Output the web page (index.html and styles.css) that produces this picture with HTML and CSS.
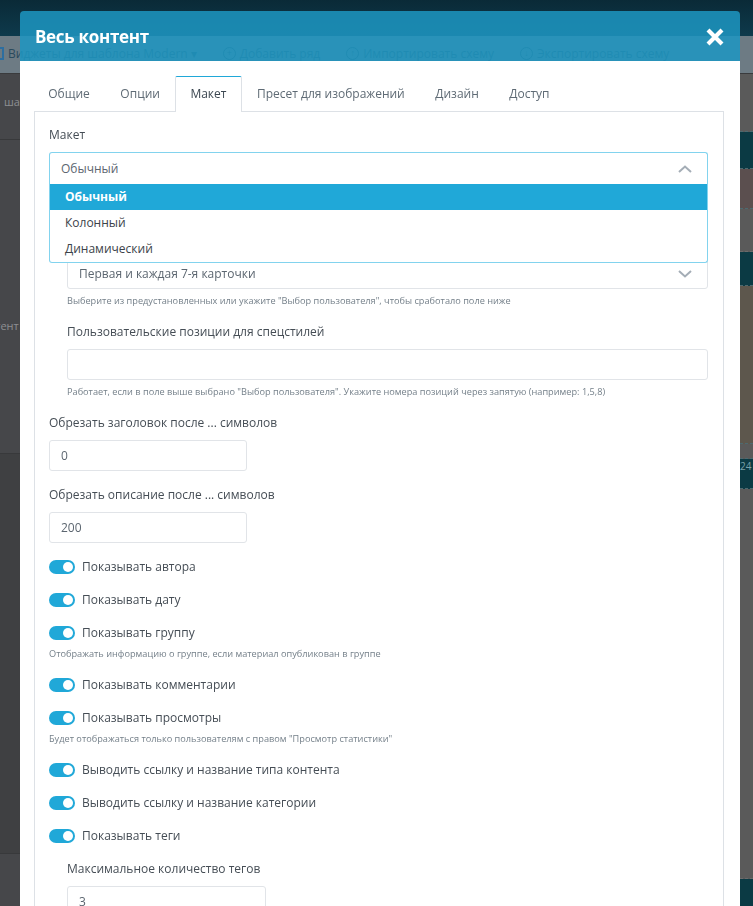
FILE: index.html
```html
<!DOCTYPE html>
<html lang="ru">
<head>
<meta charset="utf-8">
<title>Весь контент</title>
<link rel="stylesheet" href="styles.css">
</head>
<body>
<div class="page">
  <div class="topbar"></div>
  <div class="toolbar">
    <span class="tb-item tb-first"><span class="tb-sq"></span>Виджеты для шаблона Modern ▾</span>
    <span class="tb-item"><span class="tb-circ">+</span>Добавить ряд</span>
    <span class="tb-item"><span class="tb-circ">↑</span>Импортировать схему</span>
    <span class="tb-item"><span class="tb-circ">↓</span>Экспортировать схему</span>
  </div>
  <div class="workspace">
    <div class="sidebar">
      <div class="sb-row sb-r1">шаблон</div>
      <div class="sb-row sb-r2">контент</div>
      <div class="sb-row sb-r3"></div>
    </div>
    <div class="canvas"></div>
    <div class="rightcol">
      <div class="rc rc-gray" style="height:58px"></div>
      <div class="rc rc-teal" style="height:37px"></div>
      <div class="rc rc-brown" style="height:40px"></div>
      <div class="rc rc-gray rc-dash" style="height:43px"></div>
      <div class="rc rc-teal" style="height:34px"></div>
      <div class="rc rc-olive" style="height:158px"></div>
      <div class="rc rc-gray" style="height:15px"></div>
      <div class="rc rc-teal" style="height:30px">24</div>
      <div class="rc rc-gray rc-dash" style="height:390px"></div>
      <div class="rc rc-teal" style="height:40px"></div>
    </div>
  </div>
</div>

<div class="modal">
  <div class="modal-header">
    <h2 class="modal-title">Весь контент</h2>
    <svg class="close" width="18" height="18" viewBox="0 0 18 18"><path d="M2 2 L16 16 M16 2 L2 16" stroke="#fff" stroke-width="4.2" fill="none"/></svg>
  </div>
  <div class="modal-body">
    <ul class="tabs">
      <li class="tab">Общие</li>
      <li class="tab">Опции</li>
      <li class="tab active">Макет</li>
      <li class="tab">Пресет для изображений</li>
      <li class="tab">Дизайн</li>
      <li class="tab">Доступ</li>
    </ul>
    <div class="panel">
      <div class="group">
        <div class="label">Макет</div>
        <div class="select open">
          <span class="select-value">Обычный</span>
          <svg class="chev" width="14" height="8" viewBox="0 0 14 8"><path d="M1 7 L7 1.5 L13 7" stroke="#a4adb6" stroke-width="2" fill="none"/></svg>
          <ul class="menu">
            <li class="opt selected">Обычный</li>
            <li class="opt">Колонный</li>
            <li class="opt">Динамический</li>
          </ul>
        </div>
      </div>

      <div class="group">
        <div class="toggle-row"><span class="toggle"></span></div>
      </div>

      <div class="indent">
        <div class="group">
          <div class="label label-empty"></div>
          <div class="select">
            <span class="select-value">Первая и каждая 7-я карточки</span>
            <svg class="chev" width="14" height="8" viewBox="0 0 14 8"><path d="M1 1 L7 6.5 L13 1" stroke="#a4adb6" stroke-width="2" fill="none"/></svg>
          </div>
          <div class="help">Выберите из предустановленных или укажите "Выбор пользователя", чтобы сработало поле ниже</div>
        </div>
        <div class="group">
          <div class="label">Пользовательские позиции для спецстилей</div>
          <div class="input"></div>
          <div class="help">Работает, если в поле выше выбрано "Выбор пользователя". Укажите номера позиций через запятую (например: 1,5,8)</div>
        </div>
      </div>

      <div class="group">
        <div class="label">Обрезать заголовок после ... символов</div>
        <div class="input short">0</div>
      </div>
      <div class="group">
        <div class="label">Обрезать описание после ... символов</div>
        <div class="input short">200</div>
      </div>

      <div class="group">
        <div class="toggle-row"><span class="toggle"></span><span class="toggle-label">Показывать автора</span></div>
      </div>
      <div class="group">
        <div class="toggle-row"><span class="toggle"></span><span class="toggle-label">Показывать дату</span></div>
      </div>
      <div class="group">
        <div class="toggle-row"><span class="toggle"></span><span class="toggle-label">Показывать группу</span></div>
        <div class="help">Отображать информацию о группе, если материал опубликован в группе</div>
      </div>
      <div class="group">
        <div class="toggle-row"><span class="toggle"></span><span class="toggle-label">Показывать комментарии</span></div>
      </div>
      <div class="group">
        <div class="toggle-row"><span class="toggle"></span><span class="toggle-label">Показывать просмотры</span></div>
        <div class="help">Будет отображаться только пользователям с правом "Просмотр статистики"</div>
      </div>
      <div class="group">
        <div class="toggle-row"><span class="toggle"></span><span class="toggle-label">Выводить ссылку и название типа контента</span></div>
      </div>
      <div class="group">
        <div class="toggle-row"><span class="toggle"></span><span class="toggle-label">Выводить ссылку и название категории</span></div>
      </div>
      <div class="group">
        <div class="toggle-row"><span class="toggle"></span><span class="toggle-label">Показывать теги</span></div>
      </div>
      <div class="indent">
        <div class="group">
          <div class="label">Максимальное количество тегов</div>
          <div class="input short2">3</div>
        </div>
      </div>
    </div>
  </div>
</div>
</body>
</html>
```

FILE: styles.css
```css
* { box-sizing: border-box; }
html, body { margin: 0; padding: 0; }
body {
  width: 753px;
  height: 906px;
  overflow: hidden;
  font-family: "Open Sans", "Noto Sans", sans-serif;
  background: #3d3e40;
}

/* background page */
.page { height: 906px; display: flex; flex-direction: column; }
.topbar { height: 36px; background: linear-gradient(#0a2a37, #0e3a4c); flex: none; }
.toolbar {
  height: 38px;
  flex: none;
  background: #6d7b84;
  display: flex;
  align-items: flex-start;
  padding: 9px 0 0 0;
  font-size: 12px;
  color: #2a4a5d;
  border-bottom: 1px solid #3a3b3d;
  white-space: nowrap;
}
.tb-item { display: flex; align-items: center; margin-right: 26px; }
.tb-sq { width: 8px; height: 13px; border: 2px solid #2d6ea0; margin-right: 4px; margin-left: -4px; }
.tb-circ {
  width: 13px; height: 13px; border: 1.5px solid #2a4a5d; border-radius: 50%;
  font-size: 9px; line-height: 10px; text-align: center; margin-right: 4px;
}
.workspace { flex: 1; display: flex; min-height: 0; }
.sidebar { width: 20px; background: #46474a; overflow: hidden; flex: none; }
.sb-row { border-bottom: 1px solid #38393b; color: #8d8f92; font-size: 11px; white-space: nowrap; padding-left: 4px; }
.sb-r1 { height: 66px; padding-top: 20px; }
.sb-r2 { height: 314px; padding-top: 178px; text-indent: -28px; }
.sb-r3 { height: 400px; background: #3f4042; }
.canvas { flex: 1; background: #4a4b4d; }
.rightcol { width: 13px; flex: none; display: flex; flex-direction: column; overflow: hidden; }
.rc { flex: none; border-bottom: 1px dashed #4d6a70; font-size: 10px; color: #7aa0a8; overflow: hidden; }
.rc-gray { background: #5a5a5a; }
.rc-teal { background: #0b3a44; }
.rc-brown { background: #5b4f4f; }
.rc-olive { background: #5d574d; }
.rc-dash { border-bottom-color: #6b6b6b; }

/* modal */
.modal {
  position: fixed;
  left: 20px;
  top: 11px;
  width: 720px;
  height: 920px;
  border-radius: 4px 4px 0 0;
  overflow: hidden;
}
.modal-header {
  height: 50px;
  background: rgba(29, 150, 194, 0.85);
  display: flex;
  align-items: center;
  justify-content: space-between;
  padding: 0 16px 0 15px;
}
.modal-title {
  margin: 0;
  color: #fff;
  font-size: 17px;
  font-weight: 700;
  letter-spacing: -0.3px;
}
.close { display: block; margin-top: 1px; }
.modal-body {
  background: #fff;
  height: 870px;
  padding: 15px 16px 0 14px;
}

/* tabs */
.tabs { list-style: none; margin: 0 0 0 -1px; padding: 0; display: flex; position: relative; z-index: 1; }
.tab {
  padding: 8px 14.25px 9px;
  line-height: 18px;
  font-size: 12px;
  color: #5f6b75;
  border: 1px solid transparent;
  border-bottom: none;
  margin-bottom: -1px;
  border-radius: 2px 2px 0 0;
}
.tab.active {
  background: #fff;
  color: #3b4650;
  border-color: #dde1e6;
  border-top: 1px solid #20a8d8;
}
.panel {
  border: 1px solid #dde1e6;
  padding: 14px 15px 0 14px;
  height: 820px;
}

/* form */
.group { margin-bottom: 15px; }
.label { font-size: 12px; line-height: 18px; color: #454d55; margin-bottom: 8px; }
.label-empty { height: 18px; }
.help { font-size: 9.2px; line-height: 13px; color: #75808a; margin-top: 5px; padding-bottom: 1px; white-space: nowrap; }
.indent { padding-left: 18px; }

.select {
  position: relative;
  height: 31px;
  border: 1px solid #e1e4e8;
  border-radius: 3px;
  display: flex;
  align-items: center;
  justify-content: space-between;
  padding: 0 15px 0 11px;
  font-size: 12px;
  color: #5c6670;
}
.select.open {
  height: 32px;
  border-color: #82d3ee;
  border-bottom: none;
  border-radius: 3px 3px 0 0;
  z-index: 5;
  background: #fff;
  padding-left: 11px;
}
.menu {
  position: absolute;
  list-style: none;
  margin: 0;
  padding: 0;
  left: -1px;
  right: -1px;
  top: 31px;
  background: #fff;
  border: 1px solid #82d3ee;
  border-top: none;
  border-radius: 0 0 3px 3px;
}
.opt {
  height: 26px;
  line-height: 26px;
  padding-left: 15px;
  font-size: 12px;
  color: #3c434a;
}
.opt.selected { background: #20a8d8; color: #fff; font-weight: 700; }

.input {
  height: 31px;
  border: 1px solid #e1e4e8;
  border-radius: 3px;
  padding: 0 11px;
  font-size: 12px;
  line-height: 29px;
  color: #5c6670;
}
.input.short { width: 198px; }
.input.short2 { width: 199px; }

.toggle-row { display: flex; align-items: center; height: 18px; }
.toggle {
  position: relative;
  width: 26px;
  height: 14px;
  border-radius: 7px;
  background: #20a8d8;
  margin-right: 7px;
  flex: none;
}
.toggle::after {
  content: "";
  position: absolute;
  right: 2px;
  top: 2px;
  width: 10px;
  height: 10px;
  border-radius: 50%;
  background: #fff;
}
.toggle-label { font-size: 12px; color: #454d55; line-height: 18px; }
```
